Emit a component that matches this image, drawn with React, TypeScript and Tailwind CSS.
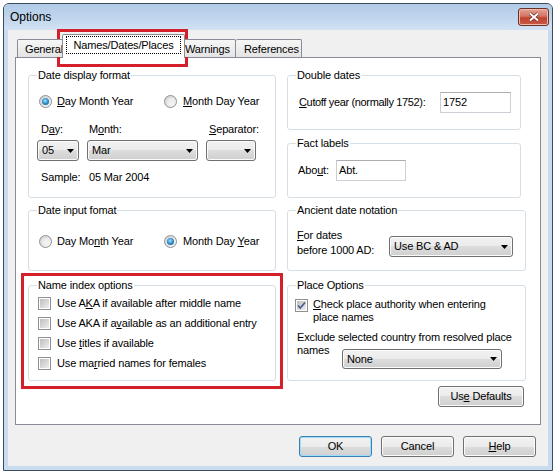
import React from "react";

const U = ({ children }: { children: React.ReactNode }) => (
  <u className="underline underline-offset-[1px]">{children}</u>
);

const Arrow = () => (
  <svg width="7" height="4" viewBox="0 0 7 4" className="shrink-0">
    <path d="M0 0h7L3.5 4z" fill="#000" />
  </svg>
);

const Radio = ({ checked }: { checked?: boolean }) => (
  <span className="flex h-[13px] w-[13px] shrink-0 items-center justify-center rounded-full border border-[#8e8f8f] bg-[linear-gradient(135deg,#cfcfcf,#fbfbfb)]">
    {checked ? (
      <span className="h-[7px] w-[7px] rounded-full bg-[radial-gradient(circle_at_45%_40%,#a6e6ff_0%,#2f8ccc_50%,#17507e_100%)]" />
    ) : (
      <span className="h-[7px] w-[7px] rounded-full bg-[linear-gradient(135deg,#e6e6e6,#f6f6f6)]" />
    )}
  </span>
);

const Check = ({ checked }: { checked?: boolean }) => (
  <span className="relative flex h-[13px] w-[13px] shrink-0 items-center justify-center border border-[#8f8f8f] bg-white">
    <span className="h-[9px] w-[9px] bg-[linear-gradient(135deg,#bdbdbd,#efefef)]" />
    {checked && (
      <svg width="13" height="13" viewBox="0 0 13 13" className="absolute left-[-1px] top-[-1px]">
        <path d="M3 6.5 5.3 9 10 3.5" fill="none" stroke="#4a5f8f" strokeWidth="1.8" />
      </svg>
    )}
  </span>
);

const Combo = ({ value, className }: { value: string; className: string }) => (
  <div
    className={`flex items-center justify-between rounded-[3px] border border-[#707070] bg-[linear-gradient(#f2f2f2_0%,#ebebeb_50%,#dddddd_50%,#cfcfcf_100%)] pl-[4px] pr-[4px] shadow-[inset_0_0_0_1px_#fbfbfb] ${className}`}
  >
    <span>{value}</span>
    <Arrow />
  </div>
);

const TextBox = ({ value, className }: { value: string; className: string }) => (
  <div
    className={`flex h-[21px] items-center border border-[#ccd0d6] border-t-[#abadb3] bg-white pl-[2px] ${className}`}
  >
    {value}
  </div>
);

const Btn = ({
  children,
  primary,
  className,
}: {
  children: React.ReactNode;
  primary?: boolean;
  className: string;
}) => (
  <button
    type="button"
    className={`flex h-[21px] items-center justify-center rounded-[3px] border bg-[linear-gradient(#f2f2f2_0%,#ebebeb_50%,#dddddd_50%,#cfcfcf_100%)] ${
      primary
        ? "border-[#3c7fb1] shadow-[inset_0_0_0_1px_#9fdcf7]"
        : "border-[#707070] shadow-[inset_0_0_0_1px_#fbfbfb]"
    } ${className}`}
  >
    <span>{children}</span>
  </button>
);

const Group = ({
  title,
  className,
  children,
}: {
  title: string;
  className: string;
  children?: React.ReactNode;
}) => (
  <div className={`relative rounded-[3px] border border-[#d5dfe5] ${className}`}>
    <span className="absolute left-[8px] top-[-7px] bg-white px-[1px] leading-[13px]">
      {title}
    </span>
    {children}
  </div>
);

const CheckRow = ({ children }: { children: React.ReactNode }) => (
  <div className="flex h-[20px] items-center gap-[6px]">
    <Check />
    <span>{children}</span>
  </div>
);

export default function App() {
  return (
    <div className="relative h-[474px] w-[557px] overflow-hidden bg-white pl-[3px] pt-[3px] font-['Liberation_Sans',Arial,sans-serif] text-[11px] leading-[13px] tracking-[-0.15px] text-black">
      {/* window */}
      <div className="flex h-[468px] w-[550px] flex-col rounded-t-[6px] border border-[#3b4b5e] bg-[#c9dbef]">
        {/* title bar */}
        <div className="flex h-[26px] items-start justify-between rounded-t-[5px] bg-[linear-gradient(#b1cae6,#c6daef_70%,#d3e2f3)]">
          <span className="mt-[6px] pl-[6px] text-[12px] leading-[14px] tracking-normal">Options</span>
          <div className="mr-[3px] mt-[4px] flex h-[18px] w-[31px] items-center justify-center rounded-[3px] border border-[#6d3027] bg-[linear-gradient(#e7a395,#d27565_45%,#c0432f_55%,#c85a45)] shadow-[inset_0_0_0_1px_#f0b9ad]">
            <svg width="12" height="10" viewBox="0 0 12 10">
              <path d="M2 1.5 10 8.5M10 1.5 2 8.5" stroke="#6a2a22" strokeWidth="3.4" />
              <path d="M2 1.5 10 8.5M10 1.5 2 8.5" stroke="#fff" strokeWidth="2" />
            </svg>
          </div>
        </div>

        {/* client area */}
        <div className="mx-[4px] h-[436px] bg-[#f0f0f0] pt-[4px]">
          {/* tabs */}
          <div className="relative z-10 ml-[7px] flex h-[23px] items-end pl-[2px]">
            <div className="h-[18px] w-[50px] overflow-hidden rounded-t-[2px] border border-b-0 border-[#898c95] bg-[linear-gradient(#f6f6f6,#e4e4e4)] pl-[7px] pt-[3px] whitespace-nowrap">
              General
            </div>
            <div className="relative z-10 mb-[-1px] ml-[-5px] flex h-[24px] w-[123px] justify-center rounded-t-[2px] border border-b-0 border-[#898c95] bg-white pt-[1px]">
              <span className="h-[18px] border border-dotted border-black px-[6px] pt-[2px]">
                Names/Dates/Places
              </span>
            </div>
            <div className="ml-[-2px] h-[18px] w-[53px] overflow-hidden rounded-t-[2px] border border-b-0 border-[#898c95] bg-[linear-gradient(#f6f6f6,#e4e4e4)] pl-[1px] pt-[3px] whitespace-nowrap">
              Warnings
            </div>
            <div className="h-[18px] w-[66px] overflow-hidden rounded-t-[2px] border border-b-0 border-l-0 border-[#898c95] bg-[linear-gradient(#f6f6f6,#e4e4e4)] pl-[8px] pt-[3px] whitespace-nowrap">
              References
            </div>
          </div>

          {/* tab panel */}
          <div className="ml-[7px] w-[526px] border border-[#898c95] bg-white pb-[17px] pl-[12px] pt-[17px]">
            <div className="flex gap-[11px]">
              <Group title="Date display format" className="h-[123px] w-[248px]">
                <div className="flex items-center pl-[10px] pt-[19px]">
                  <div className="flex w-[125px] items-center gap-[5px]">
                    <Radio checked />
                    <span>
                      <U>D</U>ay Month Year
                    </span>
                  </div>
                  <div className="flex items-center gap-[6px]">
                    <Radio />
                    <span>
                      <U>M</U>onth Day Year
                    </span>
                  </div>
                </div>
                <div className="mt-[15px] flex pl-[8px]">
                  <div className="flex w-[42px] flex-col">
                    <span className="pl-[4px]">
                      D<U>a</U>y:
                    </span>
                    <Combo value="05" className="mt-[4px] h-[21px] w-[42px]" />
                  </div>
                  <div className="ml-[8px] flex w-[111px] flex-col">
                    <span className="pl-[2px]">
                      M<U>o</U>nth:
                    </span>
                    <Combo value="Mar" className="mt-[4px] h-[21px] w-[111px]" />
                  </div>
                  <div className="ml-[8px] flex w-[50px] flex-col">
                    <span className="pl-[3px]">
                      <U>S</U>eparator:
                    </span>
                    <Combo value="" className="mt-[4px] h-[21px] w-[50px]" />
                  </div>
                </div>
                <div className="mt-[10px] flex pl-[12px]">
                  <span className="w-[48px]">Sample:</span>
                  <span>05 Mar 2004</span>
                </div>
              </Group>

              <div className="flex flex-col gap-[13px]">
                <Group title="Double dates" className="h-[55px] w-[234px]">
                  <div className="flex items-center pl-[11px] pt-[16px]">
                    <span className="w-[141px] tracking-[-0.35px]">
                      <U>C</U>utoff year (normally 1752):
                    </span>
                    <TextBox value="1752" className="w-[71px]" />
                  </div>
                </Group>
                <Group title="Fact labels" className="h-[55px] w-[234px]">
                  <div className="flex items-center pl-[10px] pt-[16px]">
                    <span className="w-[38px]">
                      Abo<U>u</U>t:
                    </span>
                    <TextBox value="Abt." className="w-[70px]" />
                  </div>
                </Group>
              </div>
            </div>

            <div className="mt-[12px] flex gap-[11px]">
              <Group title="Date input fomat" className="h-[61px] w-[248px]">
                <div className="flex items-center pl-[10px] pt-[24px]">
                  <div className="flex w-[125px] items-center gap-[5px]">
                    <Radio />
                    <span>
                      Day Mo<U>n</U>th Year
                    </span>
                  </div>
                  <div className="flex items-center gap-[6px]">
                    <Radio checked />
                    <span>
                      Month Day <U>Y</U>ear
                    </span>
                  </div>
                </div>
              </Group>
              <Group title="Ancient date notation" className="h-[61px] w-[239px]">
                <div className="flex items-end pl-[9px] pt-[17px]">
                  <div className="w-[92px] leading-[15px]">
                    <div>
                      <U>F</U>or dates
                    </div>
                    <div>before 1000 AD:</div>
                  </div>
                  <Combo value="Use BC & AD" className="mb-[1px] h-[21px] w-[124px]" />
                </div>
              </Group>
            </div>

            <div className="mt-[14px] flex gap-[11px]">
              <Group title="Name index options" className="h-[96px] w-[248px]">
                <div className="pl-[9px] pt-[7px]">
                  <CheckRow>
                    Use A<U>K</U>A if available after middle name
                  </CheckRow>
                  <CheckRow>
                    Use AKA if a<U>v</U>ailable as an additional entry
                  </CheckRow>
                  <CheckRow>
                    Use <U>t</U>itles if available
                  </CheckRow>
                  <CheckRow>
                    Use ma<U>r</U>ried names for females
                  </CheckRow>
                </div>
              </Group>
              <Group title="Place Options" className="h-[96px] w-[239px]">
                <div className="pl-[7px] pt-[12px]">
                  <div className="flex items-start">
                    <span className="mt-[1px]">
                      <Check checked />
                    </span>
                    <div className="ml-[5px]">
                      <div>
                        <U>C</U>heck place authority when entering
                      </div>
                      <div>place names</div>
                    </div>
                  </div>
                  <div className="ml-[2px] mt-[7px] whitespace-nowrap">
                    Exclude selected country from resolved place
                  </div>
                  <div className="ml-[2px] flex items-start">
                    <span className="w-[45px]">names</span>
                    <Combo value="None" className="mt-[5px] h-[20px] w-[160px]" />
                  </div>
                </div>
              </Group>
            </div>

            <div className="mt-[5px] flex w-[496px] justify-end">
              <Btn className="w-[86px]">
                Us<U>e</U> Defaults
              </Btn>
            </div>
          </div>

          {/* dialog buttons */}
          <div className="mt-[11px] flex justify-end gap-[9px] pr-[12px]">
            <Btn primary className="w-[73px]">
              OK
            </Btn>
            <Btn className="w-[73px]">Cancel</Btn>
            <Btn className="w-[73px]">
              <U>H</U>elp
            </Btn>
          </div>
        </div>
      </div>

      {/* red annotation boxes */}
      <div className="pointer-events-none absolute left-[57px] top-[29px] h-[38px] w-[131px] border-[3px] border-[#d4202b]" />
      <div className="pointer-events-none absolute left-[21px] top-[273px] h-[116px] w-[262px] border-[3px] border-[#d4202b]" />
    </div>
  );
}
